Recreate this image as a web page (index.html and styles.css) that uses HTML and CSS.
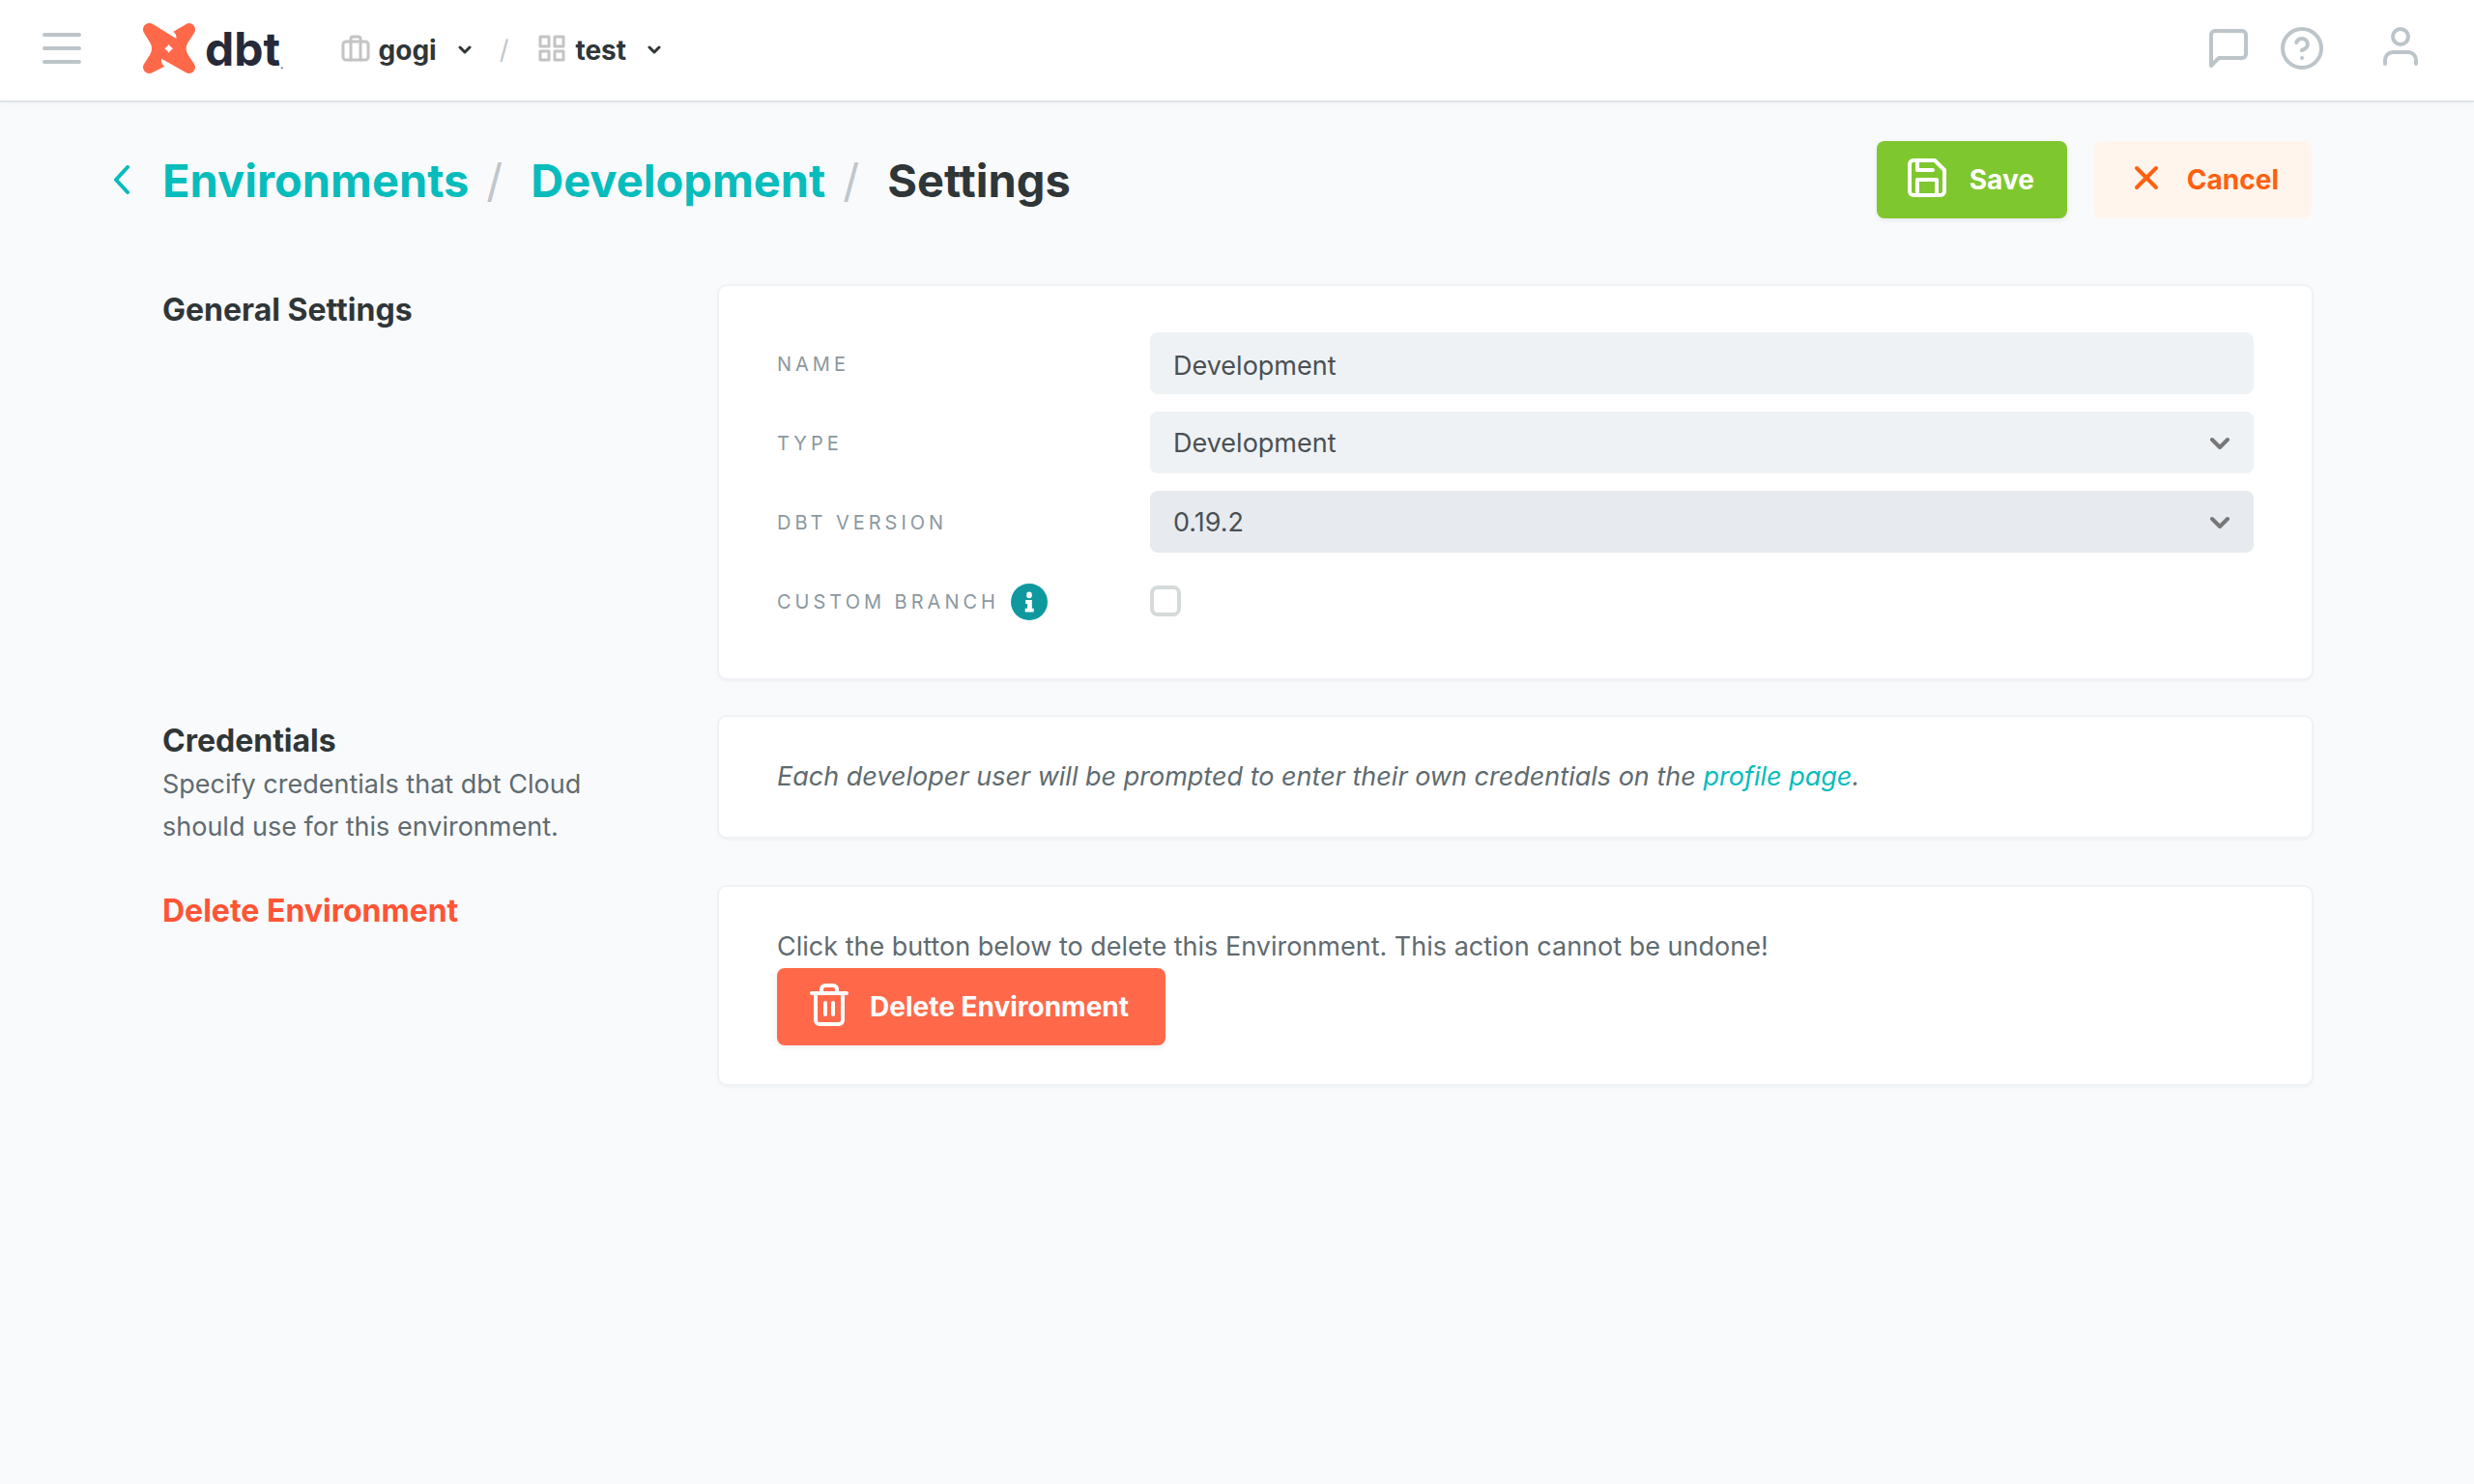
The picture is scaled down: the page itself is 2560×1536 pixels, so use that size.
FILE: index.html
```html
<!DOCTYPE html>
<html lang="en">
<head>
<meta charset="utf-8">
<meta name="viewport" content="width=device-width, initial-scale=1">
<title>Environment Settings - dbt Cloud</title>
<link rel="stylesheet" href="styles.css">
</head>
<body>
<header class="topbar">
  <button class="icon-button menu-button" type="button" aria-label="Menu">
    <svg class="icon" viewBox="0 0 24 24"><path d="M3 5h18M3 12h18M3 19h18"/></svg>
  </button>
  <a class="logo" href="#" aria-label="dbt home">
    <svg class="logo-mark" viewBox="24 42 162 156"><path fill-rule="evenodd" d="M24 62C24 50 33 42 44 42C48 42 52 43 55 45L127 90C129 82 125 73 118 68L158 45C161 43 164 42 167 42C178 42 186 51 186 62C186 66 185 69 183 72L163 103C156 114 156 128 163 139L183 169C185 172 186 175 186 178C186 189 178 198 167 198C163 198 160 197 157 195L81 152C79 161 84 172 91 176L54 195C50 197 47 198 43 198C32 198 24 189 24 178C24 175 25 172 27 169L46 139C53 128 53 114 46 103L27 72C25 69 24 66 24 62ZM104 108Q109 116 117 121Q109 126 104 134Q99 126 91 121Q99 116 104 108Z"/></svg>
    <span class="logo-word">dbt</span><span class="logo-dot">.</span>
  </a>
  <nav class="switchers" aria-label="Account and project">
    <button class="switcher" type="button">
      <svg class="switcher-icon" viewBox="0 0 30 28"><rect x="2" y="7" width="26" height="19" rx="3"/><path d="M10 26V4a2 2 0 0 1 2-2h6a2 2 0 0 1 2 2v22"/></svg>
      <span>gogi</span>
      <svg class="caret" viewBox="0 0 14 10"><path d="M2 2l5 5 5-5"/></svg>
    </button>
    <span class="switcher-slash">/</span>
    <button class="switcher" type="button">
      <svg class="switcher-icon" viewBox="0 0 30 28"><path d="M3 2h9v10H3zM18 2h9v10h-9zM3 17h9v9H3zM18 17h9v9h-9z"/></svg>
      <span>test</span>
      <svg class="caret" viewBox="0 0 14 10"><path d="M2 2l5 5 5-5"/></svg>
    </button>
  </nav>
  <div class="tools">
    <button class="icon-button" type="button" aria-label="Messages">
      <svg class="icon" viewBox="0 0 24 24"><path d="M21 15a2 2 0 0 1-2 2H7l-4 4V5a2 2 0 0 1 2-2h14a2 2 0 0 1 2 2z"/></svg>
    </button>
    <button class="icon-button" type="button" aria-label="Help">
      <svg class="icon" viewBox="0 0 24 24"><circle cx="12" cy="12" r="10"/><path d="M9.09 9a3 3 0 0 1 5.83 1c0 2-3 3-3 3M12 17h.01"/></svg>
    </button>
    <button class="icon-button profile-button" type="button" aria-label="Profile">
      <svg class="icon" viewBox="0 0 24 24"><path d="M20 21v-2a4 4 0 0 0-4-4H8a4 4 0 0 0-4 4v2"/><circle cx="12" cy="7" r="4"/></svg>
    </button>
  </div>
</header>

<main class="page">
  <div class="page-head">
    <a class="back" href="#" aria-label="Back"><svg class="back-icon" viewBox="0 0 18 30"><path d="M15 2L3 15l12 13"/></svg></a>
    <h1 class="crumbs">
      <a href="#">Environments</a>
      <span class="crumb-slash">/</span>
      <a href="#">Development</a>
      <span class="crumb-slash">/</span>
      <span>Settings</span>
    </h1>
    <div class="actions">
      <button class="button button-save" type="submit" form="settings">
        <svg class="icon" viewBox="0 0 24 24"><path d="M19 21H5a2 2 0 0 1-2-2V5a2 2 0 0 1 2-2h11l5 5v11a2 2 0 0 1-2 2z"/><path d="M17 21v-8H7v8M7 3v5h8"/></svg>
        Save
      </button>
      <button class="button button-cancel" type="button">
        <svg class="icon" viewBox="0 0 24 24"><path d="M18 7L8 17M8 7l10 10"/></svg>
        Cancel
      </button>
    </div>
  </div>

  <div class="sections">
    <section class="section">
      <div class="section-intro"><h2>General Settings</h2></div>
      <form class="card form" id="settings">
        <label class="field-label" for="name">Name</label>
        <input class="field" id="name" type="text" value="Development">

        <label class="field-label" for="type">Type</label>
        <div class="select">
          <select class="field" id="type"><option>Development</option></select>
          <svg class="select-caret" viewBox="0 0 20 14"><path d="M2 3l8 8 8-8"/></svg>
        </div>

        <label class="field-label" for="version">dbt Version</label>
        <div class="select">
          <select class="field field-active" id="version"><option>0.19.2</option></select>
          <svg class="select-caret" viewBox="0 0 20 14"><path d="M2 3l8 8 8-8"/></svg>
        </div>

        <label class="field-label" for="branch">Custom Branch
          <svg class="info" viewBox="0 0 40 40"><circle cx="20" cy="20" r="20"/><path d="M20 9a3 3.500 0 0 1 0 7a3 3.500 0 0 1 0-7zM16 18h7v9h2v4H15.500v-4H18v-5h-2z"/></svg>
        </label>
        <input class="checkbox" id="branch" type="checkbox">
      </form>
    </section>

    <section class="section">
      <div class="section-intro">
        <h2>Credentials</h2>
        <p>Specify credentials that dbt Cloud should use for this environment.</p>
      </div>
      <div class="card">
        <p class="note">Each developer user will be prompted to enter their own credentials on the <a href="#">profile page</a>.</p>
      </div>
    </section>

    <section class="section">
      <div class="section-intro"><h2 class="danger">Delete Environment</h2></div>
      <div class="card">
        <p>Click the button below to delete this Environment. This action cannot be undone!</p>
        <button class="button button-delete" type="button">
          <svg class="icon" viewBox="0 0 24 24"><path d="M3 6h18M19 6v14a2 2 0 0 1-2 2H7a2 2 0 0 1-2-2V6M8 6V4a2 2 0 0 1 2-2h4a2 2 0 0 1 2 2v2M10 11v6M14 11v6"/></svg>
          Delete Environment
        </button>
      </div>
    </section>
  </div>
</main>
</body>
</html>
```

FILE: styles.css
```css
* {
  box-sizing: border-box;
}

body {
  margin: 0;
  background: #f9fafc;
  color: #5f6b70;
  font-family: Inter, "Liberation Sans", sans-serif;
  font-size: 27px;
  line-height: 44px;
}

h1, h2, p {
  margin: 0;
}

a {
  color: #07bcbc;
  text-decoration: none;
}

button, input, select {
  font: inherit;
  color: inherit;
}

button {
  padding: 0;
  border: 0;
  background: none;
  cursor: pointer;
}

svg {
  display: block;
  flex: none;
  fill: none;
  stroke: currentColor;
  stroke-linecap: round;
  stroke-linejoin: round;
}

.icon {
  width: 48px;
  height: 48px;
  stroke-width: 2;
}

/* Top bar */

.topbar {
  display: flex;
  align-items: center;
  padding: 0 52px 0 40px;
  height: 106px;
  background: #fff;
  border-bottom: 2px solid #dfe4e8;
  box-shadow: 0 2px 8px rgba(0, 0, 0, 0.03);
}

.icon-button {
  margin-bottom: 4px;
  color: #bcc5c9;
}

.logo {
  display: flex;
  align-items: center;
  margin: 0 0 4px 60px;
  color: #262a38;
}

.logo-mark {
  width: 54px;
  height: 52px;
  margin-right: 10px;
  fill: #ff694a;
  stroke: none;
}

.logo-word {
  padding-top: 2px;
  font-size: 48px;
  line-height: 52px;
  font-weight: 700;
}

.logo-dot {
  align-self: flex-end;
  font-size: 12px;
  line-height: 20px;
}

.switchers {
  display: flex;
  align-items: center;
  margin-left: 59px;
}

.switcher {
  display: flex;
  align-items: center;
  color: #2f3638;
  font-size: 28px;
  font-weight: 700;
}

.switcher-icon {
  width: 30px;
  height: 28px;
  margin: 0 9px 4px 0;
  stroke: #c4c4c4;
  stroke-width: 3;
}

.caret {
  width: 14px;
  height: 10px;
  margin-left: 22px;
  stroke-width: 3;
}

.switcher-slash {
  margin: 0 30px 0 29px;
  color: #c0c6ca;
}

.tools {
  display: flex;
  align-items: center;
  gap: 28px;
  margin-left: auto;
}

.profile-button {
  margin: 0 0 8px 26px;
}

/* Page heading */

.page {
  padding: 40px 168px 80px 117px;
}

.page-head {
  display: flex;
  align-items: center;
}

.back-icon {
  width: 18px;
  height: 30px;
  stroke-width: 4;
}

.crumbs {
  display: flex;
  margin-left: 33px;
  padding-top: 2px;
  color: #2f3638;
  font-size: 47px;
  line-height: 60px;
  font-weight: 700;
}

.crumb-slash {
  margin: 0 29px 0 18px;
  color: #c0c6ca;
  font-weight: 400;
}

.actions {
  display: flex;
  gap: 28px;
  margin-left: auto;
}

.button {
  display: flex;
  align-items: center;
  gap: 20px;
  height: 80px;
  padding: 0 34px 0 28px;
  border-radius: 8px;
  color: #fff;
  font-size: 28px;
  font-weight: 700;
  box-shadow: 0 2px 6px rgba(0, 0, 0, 0.08);
}

.button .icon {
  margin-bottom: 4px;
}

.button-save {
  background: #7fc72e;
}

.button-cancel {
  background: #fff5ec;
  color: #ff6010;
  box-shadow: none;
}

.button-delete {
  gap: 18px;
  padding: 0 38px 0 30px;
  background: #ff694a;
}

/* Sections */

.sections {
  display: grid;
  gap: 40px;
  margin: 70px 0 0 51px;
}

.section {
  display: grid;
  grid-template-columns: 512px 1fr;
  gap: 64px;
  align-items: start;
}

.section-intro {
  padding-top: 5px;
}

.section-intro h2 {
  margin-bottom: 3px;
  color: #2f3638;
  font-size: 32px;
  line-height: 40px;
  font-weight: 700;
}

.section-intro .danger {
  color: #ff5435;
}

.card {
  padding: 40px 60px;
  background: #fff;
  border-radius: 8px;
  box-shadow: 0 0 0 2px #eff2f5, 0 2px 4px rgba(0, 0, 0, 0.08);
}

.note {
  font-style: italic;
}

.form {
  display: grid;
  grid-template-columns: 386px 1fr;
  grid-auto-rows: 64px;
  row-gap: 18px;
  align-items: center;
  padding: 48px 60px;
}

.field-label {
  display: flex;
  align-items: center;
  gap: 12px;
  padding-top: 2px;
  color: #8b98a0;
  font-size: 20px;
  letter-spacing: 4px;
  text-transform: uppercase;
}

.info {
  width: 38px;
  height: 38px;
  fill: #0f999e;
  stroke: none;
}

.info path {
  fill: #fff;
}

.field {
  width: 100%;
  height: 64px;
  padding: 2px 24px 0;
  border: 0;
  border-radius: 8px;
  background: #eef2f5;
  color: #4b5053;
  appearance: none;
}

input.field {
  padding-top: 4px;
}

.field-active {
  background: #e7ebf0;
}

.select {
  display: grid;
  align-items: center;
}

.select > * {
  grid-area: 1 / 1;
}

.select-caret {
  justify-self: end;
  width: 20px;
  height: 14px;
  margin: 2px 25px 0 0;
  stroke: #777;
  stroke-width: 4;
  pointer-events: none;
}

.checkbox {
  width: 32px;
  height: 32px;
  margin: 0;
  border: 4px solid #d5dada;
  border-radius: 8px;
  background: #fff;
  appearance: none;
}
```
